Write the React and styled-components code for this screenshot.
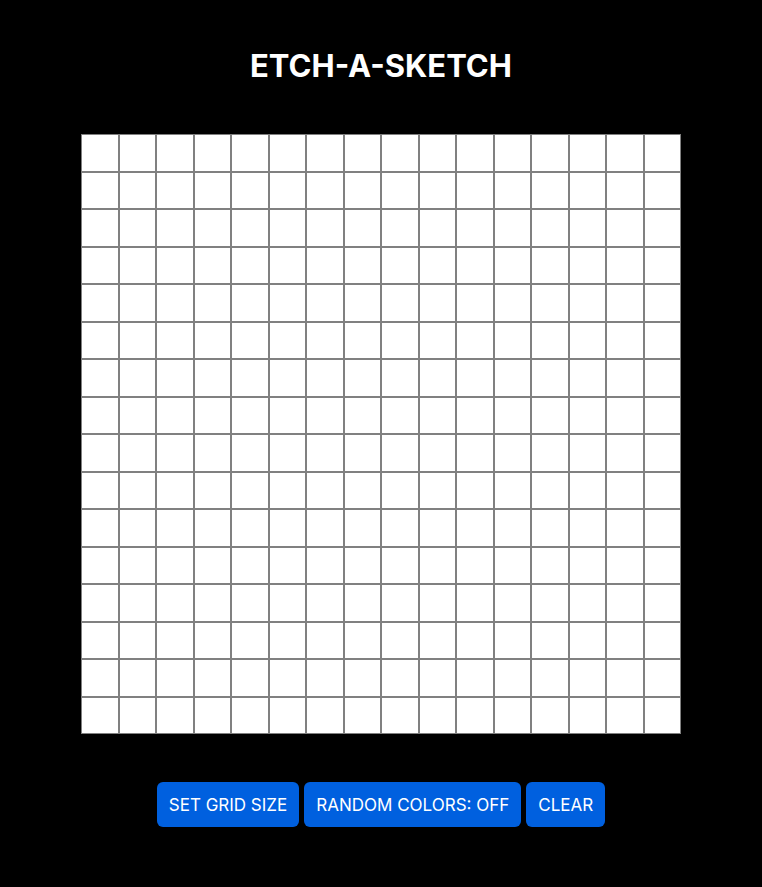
import React, { useState } from 'react';
import styled, { createGlobalStyle } from 'styled-components';

const GlobalStyle = createGlobalStyle`
    body {
        margin: 0;
        background: #000;
        font-family: Inter, "Noto Sans", sans-serif;
    }
`

const Page = styled.div`
    display: flex;
    flex-direction: column;
    align-items: center;
    min-height: 887px;
`

const Title = styled.h1`
    margin: 46px 0 0 0;
    height: 39px;
    line-height: 39px;
    font-size: 31px;
    font-weight: 700;
    color: white;
`

const Board = styled.div`
    margin-top: 49px;
    width: 600px;
    height: 600px;
    display: grid;
    grid-template-columns: repeat(${props => props.size}, 1fr);
    grid-template-rows: repeat(${props => props.size}, 1fr);
    background: white;
`

const Cell = styled.div`
    box-sizing: border-box;
    border: 1px solid gray;
`

const Controls = styled.div`
    margin-top: 48px;
    display: flex;
    gap: 5px;
`

const Button = styled.button`
    height: 45px;
    padding: 0 12px;
    border: none;
    border-radius: 6px;
    background: #0060df;
    color: white;
    font-family: Inter, "Noto Sans", sans-serif;
    font-size: 17px;
    cursor: pointer;
`

const App = () => {
    const [size] = useState(16)
    const [random, setRandom] = useState(false)

    return (
        <>
            <GlobalStyle />
            <Page>
                <Title>ETCH-A-SKETCH</Title>
                <Board size={size}>
                    {Array.from({ length: size * size }).map((_, i) => (
                        <Cell key={i} />
                    ))}
                </Board>
                <Controls>
                    <Button>SET GRID SIZE</Button>
                    <Button onClick={() => setRandom(!random)}>
                        RANDOM COLORS: {random ? 'ON' : 'OFF'}
                    </Button>
                    <Button>CLEAR</Button>
                </Controls>
            </Page>
        </>
    );
};

export default App;
